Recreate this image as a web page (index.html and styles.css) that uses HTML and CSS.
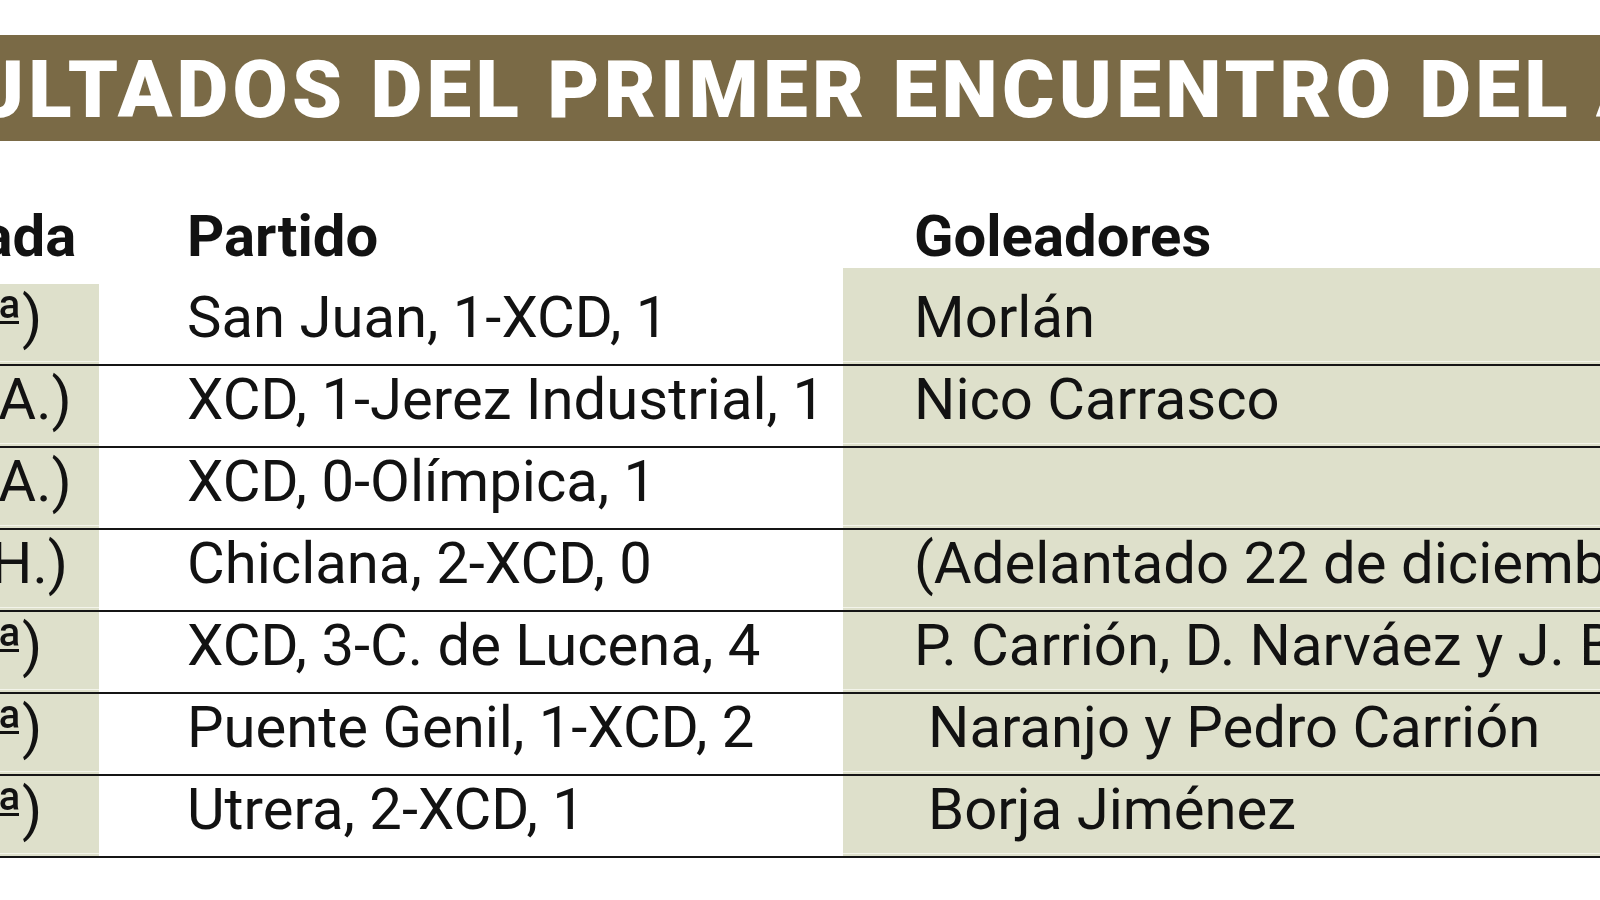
FILE: index.html
```html
<!DOCTYPE html>
<html lang="es">
<head>
<meta charset="utf-8">
<title>Resultados del primer encuentro del año</title>
<link rel="stylesheet" href="styles.css">
</head>
<body>
<div class="page">
  <div class="title">RESULTADOS DEL PRIMER ENCUENTRO DEL AÑO</div>
  <div class="table">
    <div class="row head">
      <div class="c1">Jornada</div>
      <div class="c2">Partido</div>
      <div class="c3">Goleadores</div>
    </div>
    <div class="row data">
      <div class="c1">9 (5<span class="ord">ª</span>)</div>
      <div class="c2">San Juan, 1-XCD, 1</div>
      <div class="c3">Morlán</div>
    </div>
    <div class="row data">
      <div class="c1">1 (S. A.)</div>
      <div class="c2">XCD, 1-Jerez Industrial, 1</div>
      <div class="c3">Nico Carrasco</div>
    </div>
    <div class="row data">
      <div class="c1">2 (S. A.)</div>
      <div class="c2">XCD, 0-Olímpica, 1</div>
      <div class="c3"></div>
    </div>
    <div class="row data">
      <div class="c1">3 (C.H.)</div>
      <div class="c2">Chiclana, 2-XCD, 0</div>
      <div class="c3">(Adelantado 22 de diciembre)</div>
    </div>
    <div class="row data">
      <div class="c1">4 (6<span class="ord">ª</span>)</div>
      <div class="c2">XCD, 3-C. de Lucena, 4</div>
      <div class="c3">P. Carrión, D. Narváez y J. Bernal</div>
    </div>
    <div class="row data">
      <div class="c1">5 (7<span class="ord">ª</span>)</div>
      <div class="c2">Puente Genil, 1-XCD, 2</div>
      <div class="c3 indent">Naranjo y Pedro Carrión</div>
    </div>
    <div class="row data">
      <div class="c1">6 (3<span class="ord">ª</span>)</div>
      <div class="c2">Utrera, 2-XCD, 1</div>
      <div class="c3 indent">Borja Jiménez</div>
    </div>
  </div>
</div>
</body>
</html>
```
FILE: styles.css
```css
html, body {
  margin: 0;
  padding: 0;
  overflow: hidden;
  background: #ffffff;
}

.page {
  width: 1600px;
  height: 900px;
  overflow: hidden;
  padding-top: 35px;
  box-sizing: border-box;
  font-family: Roboto, "Liberation Sans", sans-serif;
  color: #121212;
}

.title {
  height: 106px;
  box-sizing: border-box;
  padding-top: 4px;
  background: #7a6a46;
  color: #ffffff;
  font-weight: 900;
  font-size: 80px;
  line-height: 102px;
  letter-spacing: 4.25px;
  white-space: nowrap;
  overflow: hidden;
  text-indent: -189px;
}

.table {
  margin-left: -160px;
  font-size: 58px;
}

.row {
  display: grid;
  grid-template-columns: 259px 744px 1fr;
}

.row > div {
  line-height: 66px;
  white-space: nowrap;
  overflow: hidden;
}

.head {
  padding-top: 62px;
  font-weight: 700;
}

.head > div {
  padding-bottom: 15px;
}

.data {
  border-bottom: 2px solid #151515;
}

.data > div {
  height: 80px;
  box-sizing: border-box;
  padding-bottom: 14px;
}

.c1 {
  text-align: center;
}

.ord {
  display: inline-block;
  position: relative;
}

.ord::after {
  content: "";
  position: absolute;
  left: 3px;
  right: 3px;
  top: 37px;
  height: 3px;
  background: currentColor;
}

.c2 {
  padding-left: 88px;
}

.c3 {
  padding-left: 71px;
}

.c3.indent {
  padding-left: 85px;
}

.data .c1,
.data .c3 {
  background: linear-gradient(to top, #dee0cb 0, #dee0cb 2px, #f3f4ea 2px, #f3f4ea 3px, #dee0cb 3px);
}

.head .c3 {
  background: linear-gradient(to bottom, transparent calc(100% - 16px), #dee0cb calc(100% - 16px));
}
```
